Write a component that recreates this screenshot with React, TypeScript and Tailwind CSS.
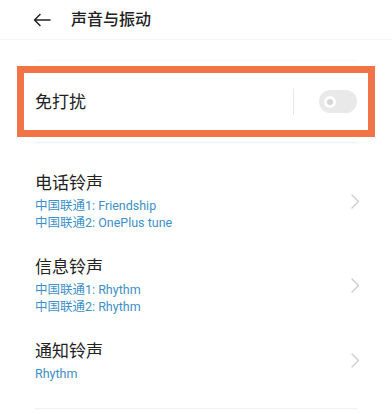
import React from 'react'

const rows = [
  { title: '电话铃声', subs: ['中国联通1: Friendship', '中国联通2: OnePlus tune'] },
  { title: '信息铃声', subs: ['中国联通1: Rhythm', '中国联通2: Rhythm'] },
  { title: '通知铃声', subs: ['Rhythm'] },
]

function Chevron() {
  return (
    <svg width="9" height="15" viewBox="0 0 9 15" fill="none" className="shrink-0">
      <path d="M1 1l6.5 6.5L1 14" stroke="#cbcbcb" strokeWidth={1.3} strokeLinecap="round" strokeLinejoin="round" />
    </svg>
  )
}

export default function App() {
  return (
    <div
      className="w-[392px] h-[414px] bg-white overflow-hidden text-[#222]"
      style={{ fontFamily: "Roboto, 'Noto Sans CJK SC', sans-serif" }}
    >
      {/* Header */}
      <div className="h-[40px] flex items-center pl-[33px] border-b border-[#f5f5f5]">
        <svg width="18" height="14" viewBox="0 0 18 14" fill="none">
          <path d="M17 7H1.5M7 1.5L1.5 7 7 12.5" stroke="#222" strokeWidth={1.5} strokeLinecap="round" strokeLinejoin="round" />
        </svg>
        <span className="ml-[20px] text-[16px] leading-[24px] font-medium">声音与振动</span>
      </div>

      <div className="h-[20px]" />
      <div className="mx-[35px] h-px bg-[#f7f7f7]" />

      {/* Highlighted do-not-disturb row */}
      <div className="mt-[5px] mx-[17px] h-[71px] border-[7px] border-[#f07448] flex items-center pl-[11px] pr-[11px]">
        <span className="flex-1 text-[17px] leading-[24px]">免打扰</span>
        <div className="w-px h-[26px] bg-[#e6e6e6]" />
        <div className="ml-[25px] w-[38px] h-[23px] rounded-full bg-[#e9e9e9] flex items-center pl-[5px]">
          <div className="w-[12px] h-[12px] rounded-full border-[3px] border-white bg-[#d6d6d6]" />
        </div>
      </div>

      <div className="mt-[5px] mx-[35px] h-px bg-[#efefef]" />

      {/* Ringtone rows */}
      <div className="pt-[28px] flex flex-col gap-[24px]">
        {rows.map((r) => (
          <div key={r.title} className="flex items-center pl-[35px] pr-[32px]">
            <div className="flex-1">
              <div className="text-[17px] leading-[24px]">{r.title}</div>
              <div className="mt-[2px]">
                {r.subs.map((s) => (
                  <div key={s} className="text-[12.5px] leading-[17px] text-[#3d8fc7]">
                    {s}
                  </div>
                ))}
              </div>
            </div>
            <Chevron />
          </div>
        ))}
      </div>

      <div className="mt-[26px] mx-[35px] h-px bg-[#efefef]" />
    </div>
  )
}
